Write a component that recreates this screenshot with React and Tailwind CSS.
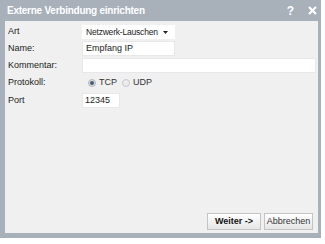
export default function App() {
  return (
    <div className="w-[325px] h-[244px] bg-white" style={{ fontFamily: '"Liberation Sans", Arial, sans-serif' }}>
      <div className="w-[321px] h-[238px] bg-[#a8b0ba] flex flex-col pl-[5px] pr-[3px] pb-[5px]">
        {/* title bar */}
        <div className="h-[21px] flex items-center justify-between pl-[2px] pr-[1px]">
          <span className="text-white font-bold text-[10px] tracking-[-0.25px]">Externe Verbindung einrichten</span>
          <div className="flex items-center gap-[14px] text-white font-bold">
            <span className="text-[12px] leading-none">?</span>
            <svg width="9" height="9" viewBox="0 0 9 9">
              <path d="M1 1 L8 8 M8 1 L1 8" stroke="white" strokeWidth="2.2" />
            </svg>
          </div>
        </div>

        {/* body */}
        <div className="flex-1 bg-[#f0f0f0] flex flex-col text-[9px] text-[#222]">
          <div className="grid grid-cols-[74px_1fr] items-center gap-y-[2px] pl-[3px] pr-[2px] pt-[4px]">
            <span>Art</span>
            <div className="w-[93px] h-[14px] bg-white flex items-center justify-between pl-[4px] pr-[7px] whitespace-nowrap">
              <span className="text-[8.5px] tracking-[-0.2px]">Netzwerk-Lauschen</span>
              <svg width="5" height="3" viewBox="0 0 5 3">
                <path d="M0 0 H5 L2.5 3 Z" fill="#222" />
              </svg>
            </div>

            <span>Name:</span>
            <div className="w-[93px] h-[15px] bg-white border border-[#e8e8e8] flex items-center pl-[3px]">
              Empfang IP
            </div>

            <span>Kommentar:</span>
            <div className="h-[15px] bg-white border border-[#e8e8e8]" />

            <span>Protokoll:</span>
            <div className="h-[16px] flex items-center gap-[3px] pl-[6px]">
              <span className="w-[8px] h-[8px] rounded-full bg-[#dcdcdc] border border-[#b8b8b8] flex items-center justify-center">
                <span className="w-[4px] h-[4px] rounded-full bg-[#3f5f7f]" />
              </span>
              <span className="text-[#333]">TCP</span>
              <span className="ml-[2px] w-[8px] h-[8px] rounded-full bg-[#ececec] border border-[#c8c8c8]" />
              <span className="text-[#333]">UDP</span>
            </div>

            <span>Port</span>
            <div className="w-[38px] h-[15px] bg-white border border-[#e8e8e8] flex items-center pl-[2px]">
              12345
            </div>
          </div>

          <div className="mt-auto flex justify-end gap-[3px] pr-[5px] pb-[3px]">
            <div className="w-[54px] h-[17px] border border-[#c4c4c4] bg-gradient-to-b from-white to-[#e6e6e6] flex items-center justify-center font-bold text-[#111]">
              Weiter -&gt;
            </div>
            <div className="w-[49px] h-[17px] border border-[#c4c4c4] bg-gradient-to-b from-white to-[#e6e6e6] flex items-center justify-center text-[#333]">
              Abbrechen
            </div>
          </div>
        </div>
      </div>
    </div>
  );
}
